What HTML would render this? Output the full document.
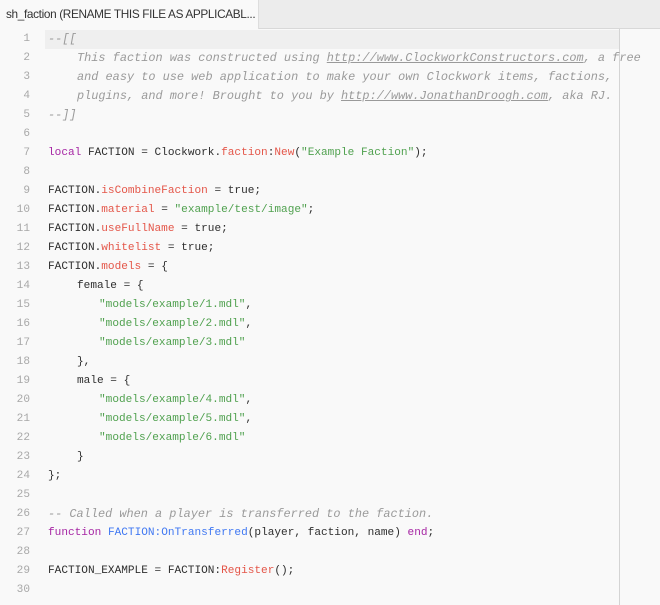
<!DOCTYPE html>
<html><head><style>
body{margin:0;width:660px;height:605px;background:#f9f9f9;overflow:hidden;position:relative;font-family:"Liberation Mono",monospace;}
.tabbar{position:absolute;left:0;top:0;width:660px;height:28px;background:#ececec;border-bottom:1px solid #d8d8d8;}
.tab{position:absolute;left:0;top:0;width:259px;height:29px;background:#f9f9f9;border-right:1px solid #ddd;font-family:"Liberation Sans",sans-serif;font-size:11.8px;color:#333;line-height:28px;padding-left:6px;box-sizing:border-box;white-space:nowrap;letter-spacing:-0.35px;overflow:hidden}
.margin{position:absolute;left:619px;top:29px;width:1px;height:576px;background:#d4d4d4}
.hl{position:absolute;left:45px;top:30px;width:574px;height:19px;background:#efefef}
.ln{position:absolute;left:0;width:30px;text-align:right;font-size:11.1px;color:#a8a8a8;line-height:19px}
.c{position:absolute;left:48px;font-size:11.1px;color:#2e2e2e;line-height:19px;white-space:pre}
.cm{color:#9a9a9a;font-style:italic;font-size:11.9px}.u{text-decoration:underline}
.k{color:#a626a4}.p{color:#e45649}.s{color:#50a14f}.f{color:#4078f2}
</style></head><body>
<div class="tabbar"><div class="tab">sh_faction (RENAME THIS FILE AS APPLICABL...</div></div>
<div class="hl"></div>
<div class="margin"></div>
<div class="ln" style="top:30px">1</div><div class="ln" style="top:49px">2</div><div class="ln" style="top:68px">3</div><div class="ln" style="top:87px">4</div><div class="ln" style="top:106px">5</div><div class="ln" style="top:125px">6</div><div class="ln" style="top:144px">7</div><div class="ln" style="top:163px">8</div><div class="ln" style="top:182px">9</div><div class="ln" style="top:201px">10</div><div class="ln" style="top:220px">11</div><div class="ln" style="top:239px">12</div><div class="ln" style="top:258px">13</div><div class="ln" style="top:277px">14</div><div class="ln" style="top:296px">15</div><div class="ln" style="top:315px">16</div><div class="ln" style="top:334px">17</div><div class="ln" style="top:353px">18</div><div class="ln" style="top:372px">19</div><div class="ln" style="top:391px">20</div><div class="ln" style="top:410px">21</div><div class="ln" style="top:429px">22</div><div class="ln" style="top:448px">23</div><div class="ln" style="top:467px">24</div><div class="ln" style="top:486px">25</div><div class="ln" style="top:505px">26</div><div class="ln" style="top:524px">27</div><div class="ln" style="top:543px">28</div><div class="ln" style="top:562px">29</div><div class="ln" style="top:581px">30</div>

<div class="c cm" style="top:30px">--[[</div>
<div class="c cm" style="top:49px;left:77px">This faction was constructed using <span class="u">http://www.ClockworkConstructors.com</span>, a free</div>
<div class="c cm" style="top:68px;left:77px">and easy to use web application to make your own Clockwork items, factions,</div>
<div class="c cm" style="top:87px;left:77px">plugins, and more! Brought to you by <span class="u">http://www.JonathanDroogh.com</span>, aka RJ.</div>
<div class="c cm" style="top:106px">--]]</div>
<div class="c" style="top:144px"><span class="k">local</span> FACTION = Clockwork.<span class="p">faction</span>:<span class="p">New</span>(<span class="s">"Example Faction"</span>);</div>
<div class="c" style="top:182px">FACTION.<span class="p">isCombineFaction</span> = true;</div>
<div class="c" style="top:201px">FACTION.<span class="p">material</span> = <span class="s">"example/test/image"</span>;</div>
<div class="c" style="top:220px">FACTION.<span class="p">useFullName</span> = true;</div>
<div class="c" style="top:239px">FACTION.<span class="p">whitelist</span> = true;</div>
<div class="c" style="top:258px">FACTION.<span class="p">models</span> = {</div>
<div class="c" style="top:277px;left:77px">female = {</div>
<div class="c s" style="top:296px;left:99px">"models/example/1.mdl"<span style="color:#2e2e2e">,</span></div>
<div class="c s" style="top:315px;left:99px">"models/example/2.mdl"<span style="color:#2e2e2e">,</span></div>
<div class="c s" style="top:334px;left:99px">"models/example/3.mdl"</div>
<div class="c" style="top:353px;left:77px">},</div>
<div class="c" style="top:372px;left:77px">male = {</div>
<div class="c s" style="top:391px;left:99px">"models/example/4.mdl"<span style="color:#2e2e2e">,</span></div>
<div class="c s" style="top:410px;left:99px">"models/example/5.mdl"<span style="color:#2e2e2e">,</span></div>
<div class="c s" style="top:429px;left:99px">"models/example/6.mdl"</div>
<div class="c" style="top:448px;left:77px">}</div>
<div class="c" style="top:467px">};</div>
<div class="c cm" style="top:505px">-- Called when a player is transferred to the faction.</div>
<div class="c" style="top:524px"><span class="k">function</span> <span class="f">FACTION:OnTransferred</span>(player, faction, name) <span class="k">end</span>;</div>
<div class="c" style="top:562px">FACTION_EXAMPLE = FACTION:<span class="p">Register</span>();</div>
</body></html>
